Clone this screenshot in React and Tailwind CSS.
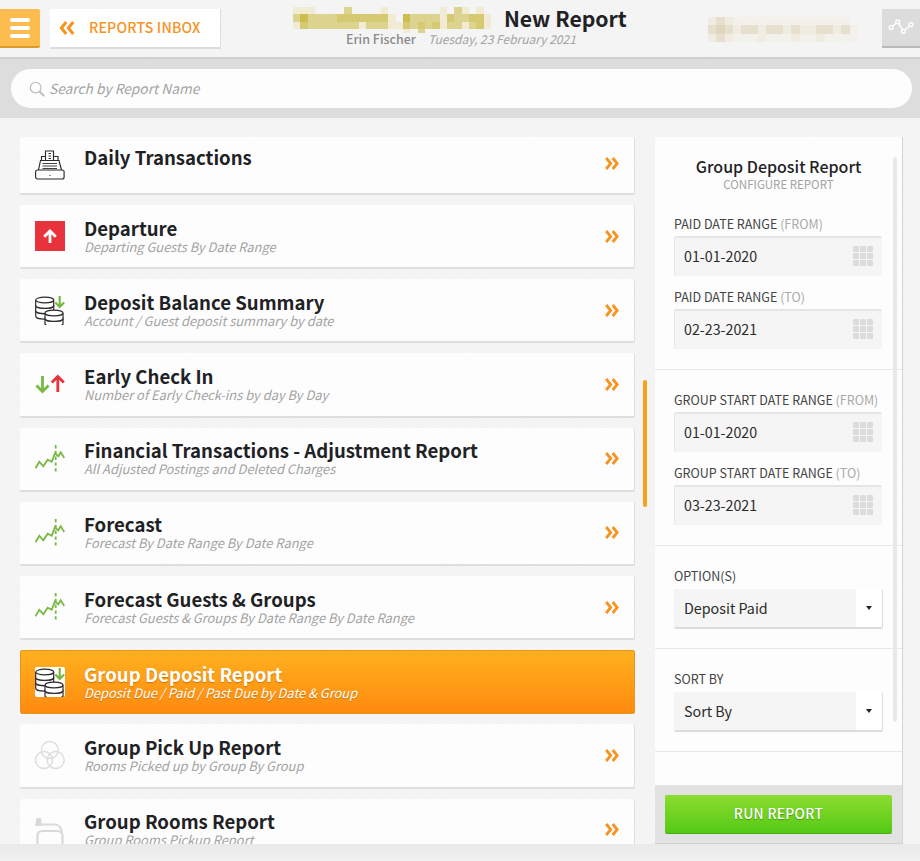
import React from "react";

const FONT = "font-['Noto_Sans_CJK_SC','Source_Sans_Pro',sans-serif]";

function Mosaic({ w, h, cell, colors, rows, className }) {
  return (
    <svg width={w} height={h} viewBox={`0 0 ${w} ${h}`} className={className} shapeRendering="crispEdges">
      {rows.map((row, y) =>
        row.split("").map((c, x) =>
          c === "." ? null : <rect key={x + "-" + y} x={x * cell} y={y * cell} width={cell} height={cell} fill={colors[c]} />
        )
      )}
    </svg>
  );
}

const Chevrons = ({ className = "w-[14px] h-[13px]", dir = "right" }) => (
  <svg viewBox="0 0 14 13" className={className} fill="none" stroke="#f7931e" strokeWidth="2.8">
    {dir === "right" ? (
      <>
        <path d="M1.200 1 L5.700 6.500 L1.200 12" />
        <path d="M7.700 1 L12.200 6.500 L7.700 12" />
      </>
    ) : (
      <>
        <path d="M6.300 1 L1.800 6.500 L6.300 12" />
        <path d="M12.800 1 L8.300 6.500 L12.800 12" />
      </>
    )}
  </svg>
);

const Register = () => (
  <svg viewBox="0 0 30 30" className="w-[30px] h-[30px]" fill="none" stroke="#2b2b2b" strokeWidth="1.150">
    <path d="M10.500 11V1h8v10" />
    <path d="M13.500 3.500h2.500M13.500 6h2.500M13.500 8.500h2.500" />
    <path d="M10.500 6.500H6.500v4M18.500 6.500h4.500v4" />
    <path d="M3.500 20l2-9.500h18.500l2.500 9.500" />
    <path d="M7.500 13.500h14.500M7.500 16h14.500M7.500 18.500h14.500" strokeWidth="0.900" />
    <rect x="0.600" y="20" width="28.500" height="9" rx="2" />
    <path d="M14.500 25.500h1" />
  </svg>
);

const Stack = ({ x, y, n }) => (
  <g>
    {Array.from({ length: n })
      .map((_, i) => n - 1 - i)
      .map((i) => (
        <g key={i}>
          <path d={`M${x} ${y + i * 5.400} v5.400 c0 1.600 4 2.900 9 2.900 s9 -1.300 9 -2.900 v-5.400`} fill="#fff" />
          <ellipse cx={x + 9} cy={y + i * 5.400} rx="9" ry="2.900" fill="#fff" />
        </g>
      ))}
  </g>
);

const Coins = () => (
  <svg viewBox="0 0 30 30" className="w-[30px] h-[30px]" fill="none" stroke="#2b2b2b" strokeWidth="1.200">
    <Stack x={0.700} y={5} n={3} />
    <Stack x={10} y={18} n={2} />
    <path d="M24.700 1v10.500M20.300 7.500l4.400 4.400 4.400-4.400" stroke="#78b943" strokeWidth="2.200" />
  </svg>
);

const Arrows = () => (
  <svg viewBox="0 0 30 30" className="w-[30px] h-[30px]" fill="none" strokeWidth="2.800">
    <path d="M7.500 7v15.500M1.500 16.500l6 6 6-6" stroke="#78b943" />
    <path d="M22.800 23V7.500M16.800 13.500l6-6 6 6" stroke="#e8333c" />
  </svg>
);

const Chart = () => (
  <svg viewBox="0 0 30 30" className="w-[30px] h-[30px]" fill="none" stroke="#78b943">
    <path d="M0.500 24.300L4.300 17.700 8.300 22.300 12.700 15.700 16.700 17.700 20 9.300 23.300 12.300 25.700 8.300 29.300 14" strokeWidth="1.800" />
    <path d="M20.700 1v28" strokeWidth="1.800" strokeDasharray="3.400 2.400" />
  </svg>
);

const Circles = () => (
  <svg viewBox="0 0 30 30" className="w-[30px] h-[30px]" fill="none" stroke="#dcdcdc" strokeWidth="1.300">
    <circle cx="14.800" cy="10" r="8.500" />
    <circle cx="9" cy="20" r="8.500" />
    <circle cx="20.700" cy="20" r="8.500" />
  </svg>
);

const Bed = () => (
  <svg viewBox="0 0 30 30" className="w-[30px] h-[30px]" fill="none" stroke="#d9d9d9" strokeWidth="2.200">
    <path d="M2.500 30v-9c0-3 2-5 5-5h15c3 0 5 2 5 5v9" />
    <path d="M6 9.500h14c3 0 6 3 7 7" />
    <path d="M1.500 3h4.500l1 8H0z" fill="#d9d9d9" stroke="none" />
  </svg>
);

const UpBox = () => (
  <div className="w-[30px] h-[30px] bg-[#e8333c] flex items-center justify-center">
    <svg viewBox="0 0 14 14" className="w-[14px] h-[14px]" fill="none" stroke="#fff" strokeWidth="2.800">
      <path d="M7 14V2M1.200 7.800L7 2l5.800 5.800" />
    </svg>
  </div>
);

const rows = [
  { t: "Daily Transactions", icon: <Register />, h: "h-[58px]", top: true },
  { t: "Departure", s: "Departing Guests By Date Range", icon: <UpBox /> },
  { t: "Deposit Balance Summary", s: "Account / Guest deposit summary by date", icon: <Coins /> },
  { t: "Early Check In", s: "Number of Early Check-ins by day By Day", icon: <Arrows /> },
  { t: "Financial Transactions - Adjustment Report", s: "All Adjusted Postings and Deleted Charges", icon: <Chart /> },
  { t: "Forecast", s: "Forecast By Date Range By Date Range", icon: <Chart /> },
  { t: "Forecast Guests & Groups", s: "Forecast Guests & Groups By Date Range By Date Range", icon: <Chart /> },
  { t: "Group Deposit Report", s: "Deposit Due / Paid / Past Due by Date & Group", icon: <Coins />, active: true },
  { t: "Group Pick Up Report", s: "Rooms Picked up by Group By Group", icon: <Circles /> },
  { t: "Group Rooms Report", s: "Group Rooms Pickup Report", icon: <Bed /> },
];

function Row({ t, s, icon, h = "h-[64.2px]", top, active }) {
  return (
    <div
      className={`${h} shrink-0 flex items-center rounded-[2px] ${
        active
          ? "bg-gradient-to-b from-[#ffb01e] to-[#ff8a0f] border border-[#e5961e]"
          : "bg-[#fdfdfd] border-b-2 border-r border-[#dedede]"
      }`}
    >
      <div className={`${active ? "w-[63px] pl-[14px]" : "w-[64px] pl-[15px]"} shrink-0`}>
        {active ? <div className="bg-white rounded-[2px] w-[30px] h-[30px]">{icon}</div> : icon}
      </div>
      <div className={`flex-1 min-w-0 ${top ? "self-start pt-[9px]" : "pb-[1px]"}`}>
        <div className={`text-[18.6px] leading-[21px] font-bold ${active ? "text-white [text-shadow:0_1px_1px_rgba(150,80,0,0.5)]" : "text-[#1f2225]"}`}>{t}</div>
        {s && (
          <div className={`mt-[1px] text-[12.9px] leading-[16px] italic ${active ? "text-white [text-shadow:0_1px_1px_rgba(150,80,0,0.5)]" : "text-[#a3a3a3]"}`}>{s}</div>
        )}
      </div>
      <div className={`w-[29px] shrink-0 ${top ? "self-start pt-[20px]" : ""}`}>
        {active ? null : <Chevrons />}
      </div>
    </div>
  );
}

const Label = ({ a, b }) => (
  <div className="text-[12.5px] leading-[18px] text-[#444] uppercase whitespace-nowrap">
    {a} {b && <span className="text-[#aaa]">{b}</span>}
  </div>
);

const DateField = ({ value }) => (
  <div className="mt-[3px] h-[40px] bg-[#f5f5f5] border-t-2 border-l border-[#e6e6e6] rounded-[2px] flex items-center justify-between pl-[9px] pr-[9px] pb-[2px]">
    <span className="text-[14.25px] text-[#2a2a2a]">{value}</span>
    <span className="grid grid-cols-3 gap-[1px]">
      {Array.from({ length: 9 }).map((_, i) => (
        <span key={i} className="w-[6px] h-[6px] bg-[#dcdcdc] rounded-[1px]" />
      ))}
    </span>
  </div>
);

const SelectField = ({ value }) => (
  <div className="mt-[4px] mr-[-1px] h-[40px] flex border-b-2 border-r border-[#dcdcdc] rounded-[2px] bg-white">
    <div className="flex-1 bg-[#f5f5f5] flex items-center pl-[10px] text-[14.3px] text-[#2a2a2a]">{value}</div>
    <div className="w-[26px] flex items-center justify-center">
      <span className="w-0 h-0 border-x-[3px] border-x-transparent border-t-[4px] border-t-[#222]" />
    </div>
  </div>
);

export default function App() {
  return (
    <div className={`${FONT} w-[920px] h-[861px] overflow-hidden bg-[#f4f4f4] bg-[repeating-linear-gradient(45deg,#f5f5f5_0px,#f5f5f5_1px,#f3f3f3_1px,#f3f3f3_2px)] flex flex-col`}>
      <header className="h-[59px] shrink-0 border-b-2 border-[#cfcfcf] flex items-start relative">
        <div className="mt-[9px] w-[40px] h-[39px] bg-[#fdbd4e] border-b-2 border-[#d99a2f] rounded-r-[2px] flex flex-col items-center justify-center gap-[4px]">
          <span className="w-[20px] h-[4px] rounded-full bg-white" />
          <span className="w-[20px] h-[4px] rounded-full bg-white" />
          <span className="w-[20px] h-[4px] rounded-full bg-white" />
        </div>
        <div className="mt-[9px] ml-[10px] w-[171px] h-[40px] bg-white border-b-2 border-r border-[#dcdcdc] flex items-center">
          <span className="ml-[9px]"><Chevrons dir="left" className="w-[16px] h-[14px]" /></span>
          <span className="ml-[14px] text-[14.1px] tracking-[0.2px] text-[#f7931e] font-medium leading-none pb-[1px]">REPORTS INBOX</span>
        </div>
        <div className="ml-[72px] w-[415px] pt-[5px] shrink-0">
          <div className="flex items-start h-[28px]">
            <Mosaic
              w={203} h={26} cell={7.330}
              className="mt-[2px] shrink-0"
              colors={{ a: "#f0ebd2", b: "#dcd38f", c: "#d5c972", d: "#cdbc4e" }}
              rows={[
                "aaa....b....a.......a.ba.a.",
                "bdbbbbccccccca.dbbbbacbbcca",
                "acbbbbbbbabbbaacbcbcabbabca",
                "...............a.b.........",
              ]}
            />
            <span className="ml-[8px] text-[21.2px] leading-[28px] font-bold text-[#1f2225] whitespace-nowrap mt-[-1px]">New Report</span>
          </div>
          <div className="pl-[53px] text-[12.5px] leading-[18px] mt-[-3px] whitespace-nowrap">
            <span className="text-[#8a8a8a] font-medium">Erin Fischer</span>
            <span className="ml-[12px] text-[12px] italic text-[#a3a3a3]">Tuesday, 23 February 2021</span>
          </div>
        </div>
        <div className="mt-[17px] shrink-0">
          <Mosaic
            w={150} h={25} cell={8.330}
            colors={{ a: "#f0ece2", b: "#e6dfcd", c: "#e0d6be", f: "#f2f1ec" }}
            rows={[
              "abaffffffffffffff.",
              "bcbabbabbabaabbabf",
              "abafffafffaffaffff",
            ]}
          />
        </div>
        <div className="absolute right-0 top-[9px] w-[38px] h-[39px] bg-[#dcdcdc] border-b-2 border-[#b9b9b9] flex items-center justify-center">
          <svg viewBox="0 0 28 18" className="w-[27px] h-[17px]" fill="none" stroke="#fff" strokeWidth="1.500">
            <path d="M3 9L10 3l6 10 8-7" />
            <circle cx="3" cy="9" r="2" fill="#dcdcdc" />
            <circle cx="10" cy="3" r="2" fill="#dcdcdc" />
            <circle cx="16" cy="13" r="2" fill="#dcdcdc" />
            <circle cx="24" cy="6" r="2" fill="#dcdcdc" />
          </svg>
        </div>
      </header>

      <div className="h-[59px] shrink-0 bg-[#dddddd] pl-[11px] pr-[8px] pt-[10px]">
        <div className="h-[39px] rounded-full bg-[#fdfdfd] flex items-center pl-[18px]">
          <svg viewBox="0 0 18 18" className="w-[16px] h-[16px]" fill="none" stroke="#b5b5b5">
            <circle cx="7.500" cy="7.500" r="6" strokeWidth="1.200" />
            <path d="M12 12l5 5" strokeWidth="2" />
          </svg>
          <span className="ml-[4px] text-[13.75px] italic text-[#a3a3a3]">Search by Report Name</span>
        </div>
      </div>

      <div className="h-[726px] shrink-0 flex pt-[19px] relative">
        <div className="ml-[20px] w-[615px] shrink-0 flex flex-col gap-[10px] overflow-hidden">
          {rows.map((r) => (
            <Row key={r.t} {...r} />
          ))}
        </div>
        <div className="absolute left-[643px] top-[262px] w-[4px] h-[127px] rounded-full bg-[#f9a11b]" />
        <aside className="ml-[20px] w-[248px] shrink-0 h-[707px] bg-[#fdfdfd] border-r border-[#d4d4d4] flex flex-col relative">
          <div className="h-[56px] pt-[19px] text-center">
            <div className="text-[16px] leading-[20px] font-medium text-[#1f2225]">Group Deposit Report</div>
            <div className="text-[11.5px] leading-[16px] text-[#a3a3a3]">CONFIGURE REPORT</div>
          </div>
          <div className="pl-[19px] pr-[20px] pt-[22px] pb-[20px] border-b border-[#e8e8e8]">
            <Label a="Paid Date Range" b="(From)" />
            <DateField value="01-01-2020" />
            <div className="mt-[12px]"><Label a="Paid Date Range" b="(To)" /></div>
            <DateField value="02-23-2021" />
          </div>
          <div className="pl-[19px] pr-[20px] pt-[21px] pb-[20px] border-b border-[#e8e8e8]">
            <Label a="Group Start Date Range" b="(From)" />
            <DateField value="01-01-2020" />
            <div className="mt-[12px]"><Label a="Group Start Date Range" b="(To)" /></div>
            <DateField value="03-23-2021" />
          </div>
          <div className="pl-[19px] pr-[20px] pt-[21px] pb-[19px] border-b border-[#e8e8e8]">
            <Label a="Option(s)" />
            <SelectField value="Deposit Paid" />
          </div>
          <div className="pl-[19px] pr-[20px] pt-[21px] pb-[19px] border-b border-[#e8e8e8]">
            <Label a="Sort By" />
            <SelectField value="Sort By" />
          </div>
          <div className="mt-auto h-[59px] bg-[#e2e2e2] border-b border-[#d0d0d0] px-[10px] pt-[10px]">
            <div className="h-[39px] rounded-[2px] bg-gradient-to-b from-[#8cdc2e] to-[#52c914] border-b border-[#4aa814] flex items-center justify-center pb-[2px] text-[13.8px] font-medium text-white tracking-[0.3px] [text-shadow:0_1px_1px_rgba(40,110,0,0.6)]">
              RUN REPORT
            </div>
          </div>
          <div className="absolute left-[238px] top-[20px] w-[4px] h-[565px] rounded-full bg-[#e8e8e8]" />
        </aside>
      </div>
      <div className="flex-1 bg-gradient-to-b from-[#e9e9e9] to-[#f2f2f2]" />
    </div>
  );
}
